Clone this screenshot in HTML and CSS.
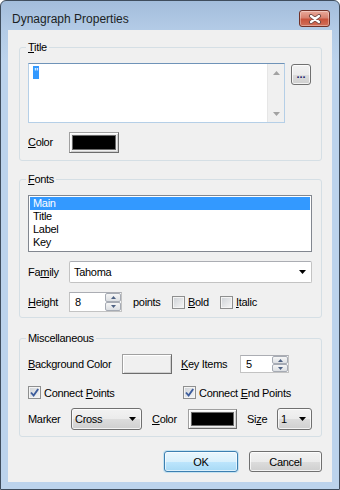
FILE: index.html
```html
<!DOCTYPE html>
<html lang="en">
<head>
  <meta charset="utf-8">
  <title>Dynagraph Properties</title>
<link rel="stylesheet" href="styles.css">
</head>
<body>
  <div class="window">
    <div class="caption">
      <span class="caption-text">Dynagraph Properties</span>
      <span class="close-btn">
        <svg width="14" height="10" viewBox="0 0 14 10"><path d="M3 2l8 6M11 2l-8 6" stroke="#6a4642" stroke-width="4" stroke-linecap="round"/><path d="M3 2l8 6M11 2l-8 6" stroke="#fff" stroke-width="2.2" stroke-linecap="round"/></svg>
      </span>
    </div>

    <div class="client">

      <fieldset class="group group-title">
        <legend><u>T</u>itle</legend>
        <div class="row row-memo">
          <div class="memo">
            <div class="memo-text"><span class="sel">"</span></div>
            <div class="vscroll">
              <span class="sb-btn"><svg width="7" height="4"><path d="M0 4h7L3.5 0z" fill="#a2a2a2"/></svg></span>
              <span class="sb-btn"><svg width="7" height="4"><path d="M0 0h7L3.5 4z" fill="#a2a2a2"/></svg></span>
            </div>
          </div>
          <div class="btn btn-dots">...</div>
        </div>
        <div class="row row-gap">
          <span class="lbl lbl-short"><u>C</u>olor</span>
          <span class="swatch"><span class="swatch-fill"></span></span>
        </div>
      </fieldset>

      <fieldset class="group group-fonts">
        <legend><u>F</u>onts</legend>
        <ul class="listbox">
          <li class="item item-sel">Main</li>
          <li class="item">Title</li>
          <li class="item">Label</li>
          <li class="item">Key</li>
        </ul>
        <div class="row row-gap">
          <span class="lbl lbl-short">Fa<u>m</u>ily</span>
          <div class="combo combo-edit">
            <span class="combo-text">Tahoma</span>
            <span class="combo-arrow"><svg width="7" height="4"><path d="M0 0h7L3.5 4z" fill="#000"/></svg></span>
          </div>
        </div>
        <div class="row row-gap">
          <span class="lbl lbl-short"><u>H</u>eight</span>
          <div class="spinner spinner-height">
            <span class="spin-text">8</span>
            <span class="spin-btns">
              <span class="spin-btn"><svg width="5" height="3"><path d="M0 3h5L2.5 0z" fill="#4d6183"/></svg></span>
              <span class="spin-btn"><svg width="5" height="3"><path d="M0 0h5L2.5 3z" fill="#4d6183"/></svg></span>
            </span>
          </div>
          <span class="points">points</span>
          <label class="check check-bold"><span class="box"></span><span><u>B</u>old</span></label>
          <label class="check"><span class="box"></span><span><u>I</u>talic</span></label>
        </div>
      </fieldset>

      <fieldset class="group group-misc">
        <legend>Miscellaneous</legend>
        <div class="row">
          <span class="lbl lbl-bg"><u>B</u>ackground Color</span>
          <span class="swatch swatch-bg"></span>
          <span class="lbl lbl-key"><u>K</u>ey Items</span>
          <div class="spinner spinner-key">
            <span class="spin-text">5</span>
            <span class="spin-btns">
              <span class="spin-btn"><svg width="5" height="3"><path d="M0 3h5L2.5 0z" fill="#4d6183"/></svg></span>
              <span class="spin-btn"><svg width="5" height="3"><path d="M0 0h5L2.5 3z" fill="#4d6183"/></svg></span>
            </span>
          </div>
        </div>
        <div class="row row-checks">
          <label class="check check-wide"><span class="box"><svg width="11" height="11"><path d="M2 5.5l2.6 3L9.2 2" stroke="#3c5c9c" stroke-width="1.9" fill="none"/></svg></span><span>Connect <u>P</u>oints</span></label>
          <label class="check"><span class="box"><svg width="11" height="11"><path d="M2 5.5l2.6 3L9.2 2" stroke="#3c5c9c" stroke-width="1.9" fill="none"/></svg></span><span>Connect <u>E</u>nd Points</span></label>
        </div>
        <div class="row row-gap">
          <span class="lbl lbl-marker">Marker</span>
          <div class="combo combo-btn combo-marker">
            <span class="combo-text">Cross</span>
            <span class="combo-arrow"><svg width="7" height="4"><path d="M0 0h7L3.5 4z" fill="#000"/></svg></span>
          </div>
          <span class="lbl lbl-color2"><u>C</u>olor</span>
          <span class="swatch swatch-marker"><span class="swatch-fill"></span></span>
          <span class="lbl lbl-size">Si<u>z</u>e</span>
          <div class="combo combo-btn combo-size">
            <span class="combo-text">1</span>
            <span class="combo-arrow"><svg width="7" height="4"><path d="M0 0h7L3.5 4z" fill="#000"/></svg></span>
          </div>
        </div>
      </fieldset>

      <div class="buttons">
        <div class="btn btn-push btn-default">OK</div>
        <div class="btn btn-push">Cancel</div>
      </div>

    </div>
  </div>
</body>
</html>
```

FILE: styles.css
```css
* { box-sizing: border-box; }

body {
  margin: 0;
  background: #ffffff;
  font-family: "Liberation Sans", Arial, sans-serif;
  font-size: 11px;
  color: #000;
}

u {
  text-decoration: underline;
  text-underline-offset: 1px;
}

/* window frame */

.window {
  width: 340px;
  height: 490px;
  padding: 0 7px 7px;
  display: flex;
  flex-direction: column;
  border: 1px solid #3f4d5d;
  border-radius: 6px 6px 0 0;
  background: linear-gradient(#a3bddb 0, #b3cbe6 28px, #bcd3ec 60px, #bcd3ec);
}

.caption {
  height: 29px;
  display: flex;
  align-items: flex-start;
}

.caption-text {
  margin: 11px 0 0 4px;
  font-size: 12px;
  line-height: 14px;
  color: #1b1f24;
}

.close-btn {
  margin: 9px 2px 0 auto;
  width: 31px;
  height: 17px;
  display: flex;
  align-items: center;
  justify-content: center;
  border: 1px solid #713127;
  border-radius: 3px;
  background: linear-gradient(#e9aa9b 0, #d88270 45%, #c8533c 55%, #d2705a 100%);
  box-shadow: inset 0 0 0 1px rgba(255, 255, 255, .35);
}

.client {
  height: 452px;
  padding: 11px 10px 0 11px;
  background: #f0f0f0;
  letter-spacing: -0.3px;
}

/* group boxes */

.group {
  margin: 0;
  min-width: 0;
  padding: 9px 9px 7px 8px;
  border: 1px solid #d5dfe5;
  border-radius: 3px;
}

.group legend {
  padding: 0 2px;
  margin-left: -2px;
  line-height: 13px;
}

.group-fonts { margin-top: 12px; padding-bottom: 5px; }
.group-misc  { margin-top: 14px; padding-bottom: 6px; }

.row {
  display: flex;
  align-items: center;
}

.row-gap { margin-top: 9px; }
.row-memo { align-items: flex-start; }
.row-checks { margin-top: 12px; }

.lbl { flex: none; line-height: 13px; }
.lbl-short  { width: 41px; }
.lbl-bg     { width: 94px; }
.lbl-key    { width: 59px; margin-left: 9px; }
.lbl-marker { width: 43px; }
.lbl-color2 { width: 36px; margin-left: 10px; }
.lbl-size   { width: 30px; margin-left: 10px; }

/* memo */

.memo {
  width: 257px;
  height: 60px;
  display: flex;
  background: #fff;
  border: 1px solid #b5cfe7;
  border-top-color: #6f93b8;
}

.memo-text {
  flex: 1;
  padding: 2px 4px;
}

.sel {
  display: inline-block;
  width: 6px;
  height: 13px;
  line-height: 13px;
  background: #3399ff;
  color: #fff;
  text-align: center;
}

.vscroll {
  width: 17px;
  display: flex;
  flex-direction: column;
  justify-content: space-between;
  background: #f0f0f0;
  border-left: 1px solid #e6e6e6;
}

.sb-btn {
  height: 17px;
  display: flex;
  align-items: center;
  justify-content: center;
}

/* buttons */

.btn {
  display: flex;
  align-items: center;
  justify-content: center;
  border: 1px solid #707070;
  border-radius: 3px;
  background: linear-gradient(#f2f2f2 0, #ebebeb 50%, #dddddd 50%, #cfcfcf 100%);
  box-shadow: inset 0 0 0 1px rgba(255, 255, 255, .75);
}

.btn-dots {
  width: 20px;
  height: 21px;
  margin: 1px 0 0 6px;
  color: #1d1d6b;
  font-weight: bold;
  letter-spacing: 0;
  line-height: 10px;
  padding-bottom: 2px;
}

.buttons {
  margin-top: 14px;
  display: flex;
  justify-content: flex-end;
  gap: 11px;
}

.btn-push {
  width: 73px;
  height: 21px;
}

.btn-default {
  width: 74px;
  border-color: #3c7fb1;
  background: linear-gradient(#eaf6fd 0, #d9f0fc 50%, #bee6fd 50%, #a7d9f5 100%);
  box-shadow: inset 0 0 0 1px rgba(255, 255, 255, .6), 0 0 0 1px rgba(120, 200, 240, .35);
}

/* colour swatches */

.swatch {
  flex: none;
  width: 50px;
  height: 21px;
  padding: 2px;
  border: 1px solid;
  border-color: #a0a0a0 #6d6d6d #6d6d6d #a0a0a0;
  background: #f0f0f0;
  box-shadow: inset 1px 1px 0 #fff, inset -1px -1px 0 #d0d0d0;
}

.swatch-fill {
  display: block;
  height: 100%;
  background: #000;
  border: 1px solid #696969;
}

.swatch-bg {
  height: 20px;
}

.swatch-marker {
  width: 49px;
  height: 20px;
}

/* list box */

.listbox {
  margin: 0;
  padding: 1px;
  height: 57px;
  list-style: none;
  background: #fff;
  border: 1px solid #828790;
}

.item {
  height: 13px;
  line-height: 13px;
  padding-left: 3px;
}

.item-sel {
  background: #3399ff;
  color: #fff;
}

/* combo boxes */

.combo {
  height: 22px;
  display: flex;
  align-items: center;
}

.combo-text {
  flex: 1;
  line-height: 13px;
}

.combo-arrow {
  width: 17px;
  display: flex;
  justify-content: center;
}

.combo-edit {
  flex: 1;
  padding-left: 4px;
  background: #fff;
  border: 1px solid #c3c3c3;
  border-top-color: #abadb3;
  border-radius: 2px;
}

.combo-btn {
  flex: none;
  padding-left: 3px;
  border: 1px solid #707070;
  border-radius: 3px;
  background: linear-gradient(#f2f2f2 0, #ebebeb 50%, #dddddd 50%, #cfcfcf 100%);
  box-shadow: inset 0 0 0 1px rgba(255, 255, 255, .75);
}

.combo-marker { width: 71px; }
.combo-size   { width: 35px; }

/* spinners */

.spinner {
  flex: none;
  display: flex;
  align-items: stretch;
  background: #fff;
  border: 1px solid #c3c3c3;
  border-top-color: #abadb3;
}

.spinner-height { width: 53px; height: 20px; }
.spinner-key    { width: 49px; height: 18px; }

.spin-text {
  flex: 1;
  padding-left: 5px;
  display: flex;
  align-items: center;
}

.spin-btns {
  width: 16px;
  display: flex;
  flex-direction: column;
}

.spin-btn {
  flex: 1;
  display: flex;
  align-items: center;
  justify-content: center;
  border: 1px solid #a6abb4;
  border-radius: 2px;
  background: linear-gradient(#f6f6f6, #dcdfe3);
}

.points {
  width: 39px;
  margin-left: 11px;
}

/* check boxes */

.check {
  display: flex;
  align-items: center;
  gap: 3px;
}

.check-bold { width: 48px; }
.check-wide { width: 155px; }

.box {
  flex: none;
  width: 13px;
  height: 13px;
  display: flex;
  align-items: center;
  justify-content: center;
  border: 1px solid #8e8f8f;
  background: linear-gradient(135deg, #cdd1d6, #f7f7f7);
  box-shadow: inset 0 0 0 1px #f4f4f4;
}
```
